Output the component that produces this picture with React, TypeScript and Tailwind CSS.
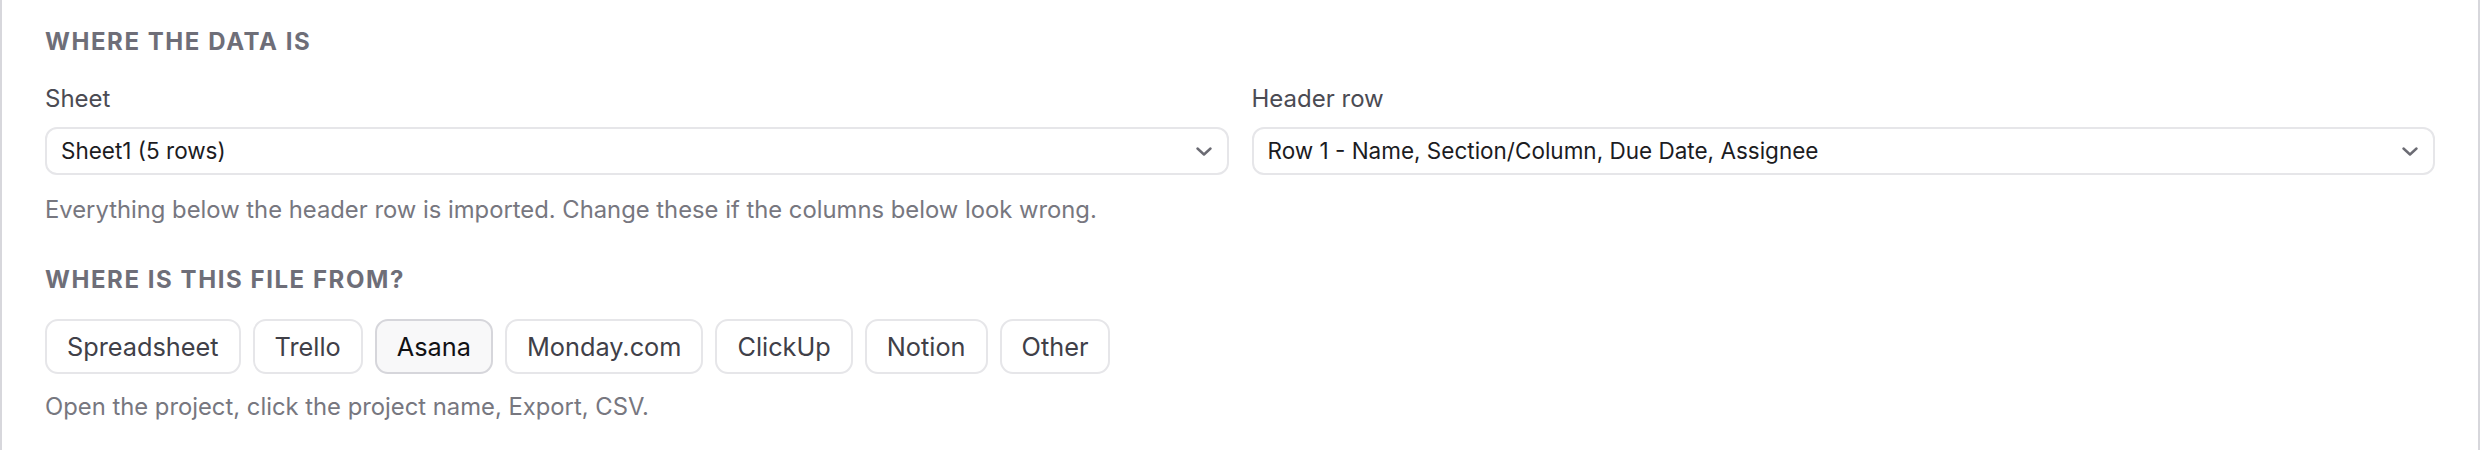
import { useState } from "react";

const sources = ["Spreadsheet", "Trello", "Asana", "Monday.com", "ClickUp", "Notion", "Other"];

function Chevron() {
  return (
    <svg width="16" height="9" viewBox="0 0 16 9" fill="none" className="shrink-0">
      <path d="M1.5 1.5L8 7.5L14.5 1.5" stroke="#6b6b73" strokeWidth="2.4" strokeLinecap="round" strokeLinejoin="round" />
    </svg>
  );
}

function SelectBox({ value }: { value: string }) {
  return (
    <div className="flex h-[48px] items-center justify-between rounded-[12px] border-2 border-[#e6e6e9] bg-white pl-[14px] pr-[15px]">
      <span className="text-[22.5px] leading-[32px] text-[#1c1c1f]">{value}</span>
      <Chevron />
    </div>
  );
}

export default function App() {
  const [source, setSource] = useState("Asana");

  return (
    <div
      className="min-h-[450px] w-full border-x-2 border-[#d7d7dc] bg-white px-[43px] pt-[26px]"
      style={{ fontFamily: "Inter, 'Noto Sans', sans-serif" }}
    >
      {/* where the data is */}
      <h2 className="text-[24px] font-bold uppercase leading-[32px] tracking-[0.065em] text-[#6e6e78]">
        Where the data is
      </h2>

      <div className="mt-[25px] grid grid-cols-2 gap-[23px]">
        <div>
          <p className="text-[24px] leading-[32px] text-[#4b4b53]">Sheet</p>
          <div className="mt-[12px]">
            <SelectBox value="Sheet1 (5 rows)" />
          </div>
        </div>
        <div>
          <p className="text-[24px] leading-[32px] text-[#4b4b53]">Header row</p>
          <div className="mt-[12px]">
            <SelectBox value="Row 1 - Name, Section/Column, Due Date, Assignee" />
          </div>
        </div>
      </div>

      <p className="mt-[19px] text-[23.8px] leading-[32px] text-[#77777f]">
        Everything below the header row is imported. Change these if the columns below look wrong.
      </p>

      {/* where is this file from */}
      <h2 className="mt-[38px] text-[24px] font-bold uppercase leading-[32px] tracking-[0.065em] text-[#6e6e78]">
        Where is this file from?
      </h2>

      <div className="mt-[23px] flex gap-[12px]">
        {sources.map((s) => {
          const active = s === source;
          return (
            <button
              key={s}
              onClick={() => setSource(s)}
              className={
                active
                  ? "h-[55px] rounded-[13px] border-2 border-[#d6d6db] bg-[#f8f8f9] px-[20px] text-[25.3px] text-[#111114]"
                  : "h-[55px] rounded-[13px] border-2 border-[#e6e6e9] bg-white px-[20px] text-[25.3px] text-[#404048]"
              }
            >
              {s}
            </button>
          );
        })}
      </div>

      <p className="mt-[17px] text-[23.8px] leading-[32px] text-[#77777f]">
        Open the project, click the project name, Export, CSV.
      </p>
    </div>
  );
}
